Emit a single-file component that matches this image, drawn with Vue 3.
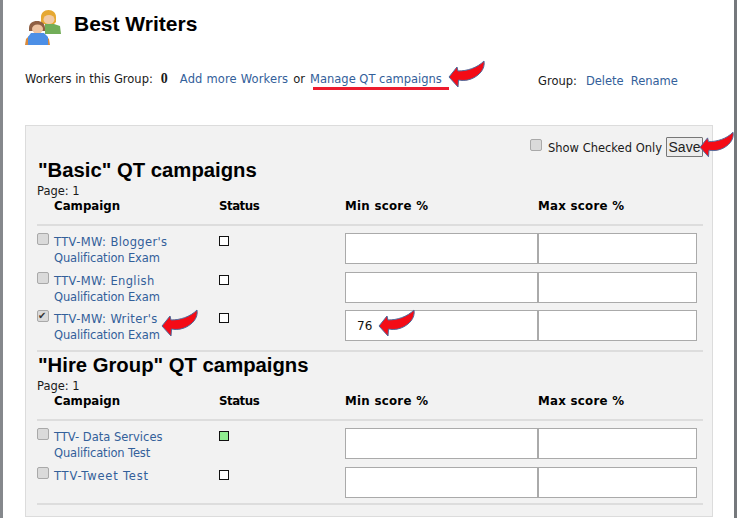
<script setup>
const sections = [
  {
    title: '"Basic" QT campaigns',
    rows: [
      { id: 'b1', lines: ["TTV-MW: Blogger's", 'Qualification Exam'], wide: 'wide', checked: false, status: 'none', value: '' },
      { id: 'b2', lines: ['TTV-MW: English', 'Qualification Exam'], wide: 'wide', checked: false, status: 'none', value: '' },
      { id: 'b3', lines: ["TTV-MW: Writer's", 'Qualification Exam'], wide: 'wide', checked: true, status: 'none', value: '76', arrows: true },
    ],
  },
  {
    title: '"Hire Group" QT campaigns',
    rows: [
      { id: 'h1', lines: ['TTV- Data Services', 'Qualification Test'], wide: '', checked: false, status: 'ok', value: '' },
      { id: 'h2', lines: ['TTV-Tweet Test'], wide: 'widest', checked: false, status: 'none', value: '' },
    ],
  },
]
const arrowPath = 'M0 17 L8 7 L9 11 C18 11 28 8 35 1 C36.500 9 30 16 22 19 C17 21 12 20.500 9.500 20 L9 27 Z'
</script>

<template>
  <div class="frame">
    <header class="title">
      <svg class="people" width="36" height="36" viewBox="0 0 36 36">
        <path d="M16 7c0-4 3-7 7.500-7S31 3 31 7v5l-2 2H18l-2-2z" fill="#e6a832" />
        <ellipse cx="24" cy="9.500" rx="5.500" ry="4.500" fill="#f2caa5" />
        <path d="M20 14h9l6 2 1 8H20z" fill="#72ad58" />
        <path d="M4 18c0-4.500 3.500-7 8-7s8 2.500 8 7v3H4z" fill="#8f5f42" />
        <ellipse cx="12.500" cy="19" rx="5.500" ry="4.500" fill="#eec3a0" />
        <path d="M0 35l1-6 3-3h17l3 3 1 6z" fill="#d98a3c" />
        <path d="M6 23h13l4 4v8H3v-8z" fill="#4c8fe6" />
      </svg>
      <h1>Best Writers</h1>
    </header>

    <div class="info">
      <div class="info-left">
        <span>Workers in this Group:</span>
        <b class="count">0</b>
        <a class="add">Add more Workers</a>
        <span>or</span>
        <a class="manage">Manage QT campaigns
          <svg class="arrow manage-arrow" width="36" height="28" viewBox="0 0 36 28"><path :d="arrowPath" /></svg>
        </a>
      </div>
      <div class="info-right">
        <span>Group:</span>
        <a>Delete</a>
        <a>Rename</a>
      </div>
    </div>

    <main class="panel">
      <div class="toolbar">
        <label class="only"><input type="checkbox" class="check" />Show Checked Only</label>
        <button class="save" type="button">Save
          <svg class="arrow save-arrow" width="34" height="27" viewBox="0 0 36 28"><path :d="arrowPath" /></svg>
        </button>
      </div>

      <section v-for="section in sections" :key="section.title" class="section">
        <h2>{{ section.title }}</h2>
        <div class="page">Page: 1</div>
        <div class="grid head">
          <b class="col-campaign">Campaign</b>
          <b class="col-status">Status</b>
          <b class="col-score">Min score %</b>
          <b class="col-score">Max score %</b>
        </div>
        <div class="rows">
          <div v-for="row in section.rows" :key="row.id" class="grid row">
            <div class="campaign">
              <input type="checkbox" class="check" :checked="row.checked" />
              <a class="name">
                <span class="first" :class="row.wide">{{ row.lines[0] }}</span>
                <span v-if="row.lines[1]" class="second">{{ row.lines[1] }}</span>
                <svg v-if="row.arrows" class="arrow name-arrow" width="36" height="28" viewBox="0 0 36 28"><path :d="arrowPath" /></svg>
              </a>
            </div>
            <div><span class="status" :class="row.status"></span></div>
            <div class="inputs">
              <div class="field">
                <input class="score" :value="row.value" />
                <svg v-if="row.arrows" class="arrow value-arrow" width="36" height="28" viewBox="0 0 36 28"><path :d="arrowPath" /></svg>
              </div>
              <div class="field"><input class="score" /></div>
            </div>
          </div>
        </div>
      </section>
    </main>
  </div>
</template>

<style scoped>
.frame {
  box-sizing: border-box;
  width: 737px;
  height: 518px;
  padding: 0 21px 0 22px;
  overflow: hidden;
  border-left: 3px solid #85888c;
  border-right: 3px solid #75787c;
  background: #fff;
  color: #1a1a1a;
  font-family: "DejaVu Sans", Verdana, sans-serif;
  font-size: 11.500px;
  line-height: 16px;
}
a { color: #33609a; }
.title {
  display: flex;
  align-items: flex-start;
  height: 71px;
  padding-top: 10px;
  box-sizing: border-box;
}
.people { display: block; filter: blur(0.35px); }
h1 {
  margin: 1px 0 0 13px;
  color: #000;
  font: bold 21px/26px "Liberation Sans", Arial, sans-serif;
}
.info {
  display: flex;
  height: 54px;
  align-items: flex-start;
}
.info-left { display: flex; width: 513px; }
.count { margin: 0 12px 0 8px; font: bold 14px/16px "Liberation Serif", serif; }
.add { margin-right: 5px; letter-spacing: 0.16px; }
.manage {
  position: relative;
  margin-left: 5px;
}
.manage::after {
  content: "";
  position: absolute;
  left: 3px;
  right: -7px;
  top: 16px;
  height: 3px;
  background: #ed1c2e;
}
.info-right { display: flex; padding-top: 2px; }
.info-right a { margin-left: 9px; }
.info-right a + a { margin-left: 7px; }
.panel {
  box-sizing: border-box;
  height: 392px;
  padding: 0 9px 0 11px;
  background: #f2f2f2;
  border: 1px solid #dcdcdc;
}
.toolbar {
  display: flex;
  justify-content: flex-end;
  align-items: flex-start;
  height: 31px;
  padding-top: 11px;
  box-sizing: border-box;
}
.only { display: flex; align-items: flex-start; padding-top: 3px; }
.only .check { margin: -1px 6px 0 0; }
.check {
  appearance: none;
  position: relative;
  box-sizing: border-box;
  width: 12px;
  height: 12px;
  margin: 0;
  border: 1px solid #a9a9a9;
  border-radius: 2px;
  background: #dadada;
}
.check:checked::after {
  content: "✔";
  position: absolute;
  left: 0;
  top: -1px;
  color: #333;
  font: 10px/12px "DejaVu Sans", sans-serif;
}
.save {
  position: relative;
  box-sizing: border-box;
  width: 37px;
  height: 20px;
  margin-left: 4px;
  padding: 0;
  border: 1px solid #777;
  border-radius: 1px;
  background: #ececec;
  color: #222;
  font: 14px "Liberation Sans", Arial, sans-serif;
}
h2 {
  margin: 0 0 0 1px;
  color: #000;
  font: bold 20.300px/26px "Liberation Sans", Arial, sans-serif;
}
.page { height: 15px; line-height: 17px; }
.grid {
  display: grid;
  grid-template-columns: 182px 126px 352px;
}
.head {
  grid-template-columns: 182px 126px 193px 159px;
  box-sizing: border-box;
  height: 28px;
  line-height: 16px;
  border-bottom: 2px solid #dddddd;
  color: #000;
  font-size: 11.800px;
}
.col-campaign { padding-left: 17px; }
.col-status { letter-spacing: -0.5px; }
.col-score { letter-spacing: 0.28px; }
.rows { padding: 7px 0 1px; }
.row { height: 38.670px; }
.section + .section { border-top: 2px solid #dddddd; }
.section + .section .rows { padding-bottom: 0; border-bottom: 2px solid #dddddd; }
.section + .section .row:last-child { height: 36px; }
.campaign { display: flex; align-items: flex-start; }
.campaign .check { margin: 0 5px 0 0; }
.name { position: relative; display: block; line-height: 16px; margin-top: 1px; }
.first, .second { display: block; white-space: nowrap; }
.wide { letter-spacing: 0.38px; }
.widest { letter-spacing: 0.8px; }
.second { letter-spacing: -0.15px; }
.status {
  display: block;
  box-sizing: border-box;
  width: 10px;
  height: 10px;
  margin-top: 3px;
  border: 1px solid #111;
  background: #fff;
}
.status.ok { background: #90ee90; }
.inputs { display: flex; }
.field { position: relative; width: 193px; }
.field + .field { width: 159px; }
.score {
  display: block;
  box-sizing: border-box;
  width: 100%;
  height: 31px;
  padding: 0 11px;
  border: 1px solid #aaa;
  border-radius: 0;
  background: #fff;
  color: #111;
  font: 12px "DejaVu Sans", Verdana, sans-serif;
}
.arrow {
  position: absolute;
  fill: #f40b16;
  stroke: #4d6a9c;
  stroke-width: 1;
  overflow: visible;
}
.manage-arrow { left: calc(100% + 7px); top: -11px; }
.save-arrow { left: 33px; top: -7px; }
.name-arrow { left: 108px; top: -2px; }
.value-arrow { left: 34px; top: -1px; }
</style>
